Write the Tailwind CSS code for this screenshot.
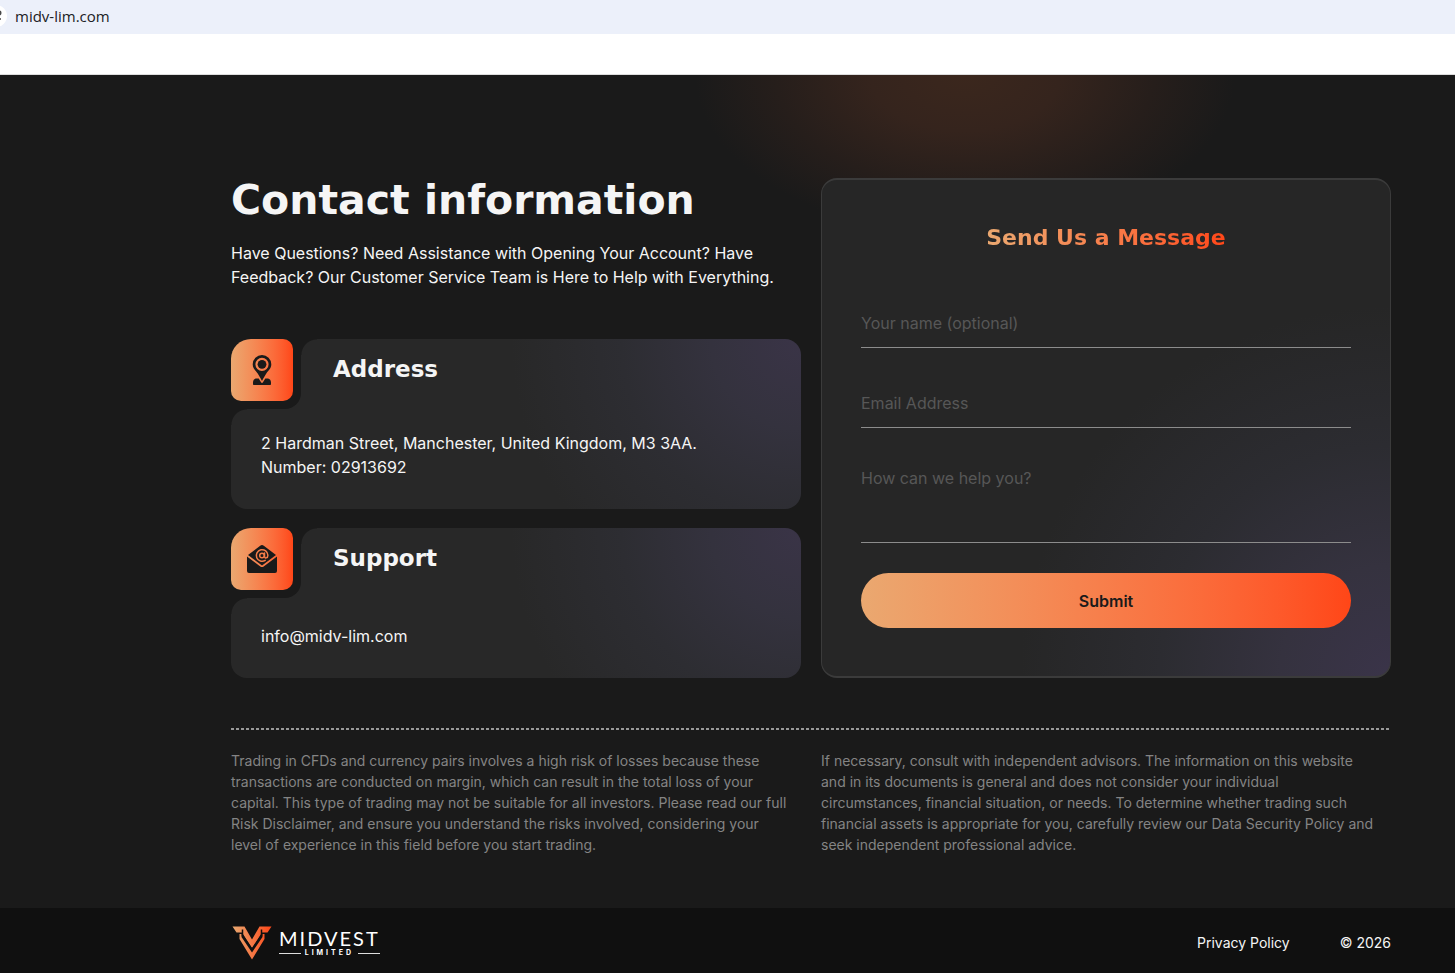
<!DOCTYPE html>
<html lang="en">
<head>
    <meta charset="UTF-8">
    <meta name="viewport" content="width=device-width, initial-scale=1.0">
    <title>Midvest Limited - Contact</title>
    <script src="https://cdn.jsdelivr.net/npm/@tailwindcss/browser@4"></script>
</head>
<body class="min-h-screen flex flex-col bg-[#1a1a1a] font-['Inter',sans-serif] text-base text-[#f5f5f5]">
    <!-- Address bar -->
    <header class="bg-white h-[75px] border-b border-[#dddddd]">
        <div class="flex items-center h-[34px] pb-[2px] bg-[#ecf0fa] overflow-hidden">
            <svg class="w-[22px] h-[22px] -ml-[15px] shrink-0" viewBox="0 0 22 22" fill="none">
                <circle cx="11" cy="11" r="11" fill="#fff" />
                <path d="M6 8h6M11 14h5" stroke="#474747" stroke-width="1.5" />
                <circle cx="14" cy="8" r="1.8" stroke="#474747" stroke-width="1.5" />
                <circle cx="8" cy="14" r="1.8" stroke="#474747" stroke-width="1.5" />
            </svg>
            <span class="ml-2 font-['Open_Sans',sans-serif] text-[15px] text-[#202124]">midv-lim.com</span>
        </div>
    </header>

    <!-- Main Content -->
    <main class="grow pl-[231px] pr-16 pt-[103px] pb-[52px] bg-[radial-gradient(ellipse_270px_160px_at_965px_0px,#3b271d,#35241d_35%,#261e1b_70%,#1a1a1a)] bg-no-repeat">
        <div class="grid grid-cols-2 gap-5">
            <!-- Contact information -->
            <section class="flex flex-col">
                <h1 class="font-['DejaVu_Sans',sans-serif] font-bold text-[41px] leading-[44px]">Contact information</h1>
                <p class="mt-[19px] leading-6">Have Questions? Need Assistance with Opening Your Account? Have Feedback? Our Customer Service Team is Here to Help with Everything.</p>

                <div class="mt-[50px] h-[170px] rounded-2xl bg-[radial-gradient(circle_at_100%_0%,#3a3447,#34323e_90px,#2d2d32_180px,#282828_290px)]">
                    <div class="flex">
                        <div class="relative w-[70px] h-[70px] bg-[#1a1a1a] rounded-br-2xl">
                            <div class="flex items-center justify-center w-[62px] h-[62px] rounded-[10px] rounded-tl-[20px] bg-linear-to-r from-[#eaa870] to-[#ff4617]">
                                <svg class="w-[30px] h-[30px]" viewBox="0 0 30 30" fill="#1a1a1a">
                                    <path fill-rule="evenodd" d="M15 0a9.300 9.300 0 0 1 9.300 9.300c0 4.400-2.800 6-5 9.200-1.500 2.200-2.600 4.500-4.300 7.500-1.700-3-2.800-5.300-4.300-7.500-2.200-3.200-5-4.800-5-9.200A9.300 9.300 0 0 1 15 0zm0 2.700a6.600 6.600 0 1 0 0 13.200 6.600 6.600 0 0 0 0-13.200z" />
                                    <circle cx="15" cy="9.300" r="4.400" />
                                    <path d="M9 23.500c-1.800.3-3 1.800-3 4V29c0 .6.400 1 1 1h16c.6 0 1-.4 1-1v-1.500c0-2.200-1.200-3.700-3-4h-2.700L15.800 27.500c-.4.600-1.200.6-1.600 0L11.700 23.500z" />
                                </svg>
                            </div>
                            <span class="absolute left-full top-0 w-4 h-4 bg-[radial-gradient(circle_at_100%_100%,transparent_15px,#1a1a1a_16px)]"></span>
                            <span class="absolute left-0 top-full w-4 h-4 bg-[radial-gradient(circle_at_100%_100%,transparent_15px,#1a1a1a_16px)]"></span>
                        </div>
                        <h2 class="ml-8 mt-4 font-['DejaVu_Sans',sans-serif] font-bold text-[23px] leading-7">Address</h2>
                    </div>
                    <p class="mt-[22px] px-[30px] leading-6">2 Hardman Street, Manchester, United Kingdom, M3 3AA.<br>Number: 02913692</p>
                </div>

                <div class="mt-[19px] h-[150px] rounded-2xl bg-[radial-gradient(circle_at_100%_0%,#3a3447,#34323e_90px,#2d2d32_180px,#282828_290px)]">
                    <div class="flex">
                        <div class="relative w-[70px] h-[70px] bg-[#1a1a1a] rounded-br-2xl">
                            <div class="flex items-center justify-center w-[62px] h-[62px] rounded-[10px] rounded-tl-[20px] bg-linear-to-r from-[#eaa870] to-[#ff4617]">
                                <svg class="w-[30px] h-[30px]" viewBox="0 0 30 30" fill="#1a1a1a">
                                    <path d="M15 1c.7 0 1.200.3 1.800.8L29 11 15 21.500 1 11l12.200-9.200C13.800 1.300 14.300 1 15 1z" />
                                    <path d="M0 12.500l13.300 10c1 .8 2.400.8 3.400 0l13.300-10V27a2 2 0 0 1-2 2H2a2 2 0 0 1-2-2z" />
                                    <g fill="none" stroke="#f37c49" stroke-width="1.500" stroke-linecap="round">
                                        <circle cx="15" cy="11.500" r="2.300" />
                                        <path d="M17.500 9v3.200c0 2.600 3.400 2.200 3.400-.9a5.800 5.800 0 1 0-2.700 5.100" />
                                    </g>
                                </svg>
                            </div>
                            <span class="absolute left-full top-0 w-4 h-4 bg-[radial-gradient(circle_at_100%_100%,transparent_15px,#1a1a1a_16px)]"></span>
                            <span class="absolute left-0 top-full w-4 h-4 bg-[radial-gradient(circle_at_100%_100%,transparent_15px,#1a1a1a_16px)]"></span>
                        </div>
                        <h2 class="ml-8 mt-4 font-['DejaVu_Sans',sans-serif] font-bold text-[23px] leading-7">Support</h2>
                    </div>
                    <p class="mt-[26px] px-[30px] leading-6">info@midv-lim.com</p>
                </div>
            </section>

            <!-- Message form -->
            <form class="flex flex-col px-[39px] pt-11 rounded-2xl border border-y-2 border-[#3b3b3b] bg-[radial-gradient(circle_at_100%_100%,#3a3449,#35323f_110px,#2c2c31_230px,#262626_370px)]">
                <h2 class="self-center font-['DejaVu_Sans',sans-serif] font-bold text-[22px] leading-7 text-transparent bg-clip-text bg-linear-to-r from-[#eaa870] to-[#ff4617]">Send Us a Message</h2>
                <input type="text" aria-label="Your name (optional)" placeholder="Your name (optional)" class="mt-[46px] h-[50px] border-b border-[#8c8c8c] placeholder:text-[#575757] outline-none">
                <input type="email" aria-label="Email Address" placeholder="Email Address" class="mt-[30px] h-[50px] border-b border-[#8c8c8c] placeholder:text-[#575757] outline-none">
                <textarea aria-label="How can we help you?" placeholder="How can we help you?" class="mt-[30px] pt-2 h-[85px] leading-6 border-b border-[#8c8c8c] placeholder:text-[#575757] outline-none resize-none"></textarea>
                <button type="submit" class="mt-[30px] h-[55px] rounded-full bg-linear-to-r from-[#eaa870] to-[#ff4617] font-semibold text-[#1a1a1a]">Submit</button>
            </form>
        </div>

        <!-- Risk disclaimer -->
        <div class="mt-[50px] h-[2px] bg-[repeating-linear-gradient(90deg,#999_0px,#999_3px,transparent_3px,transparent_5px)]"></div>
        <div class="mt-5 grid grid-cols-2 gap-5 text-sm leading-[21px] text-[#848484]">
            <p class="pr-3">Trading in CFDs and currency pairs involves a high risk of losses because these transactions are conducted on margin, which can result in the total loss of your capital. This type of trading may not be suitable for all investors. Please read our full Risk Disclaimer, and ensure you understand the risks involved, considering your level of experience in this field before you start trading.</p>
            <p class="pr-3">If necessary, consult with independent advisors. The information on this website and in its documents is general and does not consider your individual circumstances, financial situation, or needs. To determine whether trading such financial assets is appropriate for you, carefully review our Data Security Policy and seek independent professional advice.</p>
        </div>
    </main>

    <!-- Footer -->
    <footer class="flex items-center justify-between h-[65px] pl-[231px] pr-16 pt-1 bg-[#101010] text-sm">
        <a href="/" class="flex items-center">
            <svg class="w-[42px] h-[36px]" viewBox="0 0 42 36">
                <defs>
                    <linearGradient id="logo" gradientUnits="userSpaceOnUse" x1="2" x2="41" y1="0" y2="0">
                        <stop offset="0" stop-color="#eaa870" />
                        <stop offset="1" stop-color="#ff4617" />
                    </linearGradient>
                </defs>
                <path fill="url(#logo)" d="M1.500 1.500H13.500L21 14.500 28.500 1.500H40.500L36.500 7.500H31L21 23 11 7.500H5.500z" />
                <path fill="url(#logo)" d="M8.500 9L10.500 9 10.500 12 21 27.500 31.500 12 31.500 9 33.500 9 33.500 14 21 34.500 8.500 14z" />
                <path fill="none" stroke="#101010" stroke-width="1.500" d="M11.500 4.500V10.500L21 24.500 30.500 10.500V4.500" />
            </svg>
            <span class="ml-[6px] flex flex-col text-white">
                <span class="font-['Lato',sans-serif] text-[20px] leading-5 tracking-widest">MIDVEST</span>
                <span class="mt-px flex items-center gap-1 font-['Inter',sans-serif] text-[7px] leading-2 font-bold tracking-[3px]">
                    <span class="grow h-px bg-[#dddddd]"></span>LIMITED<span class="grow h-px bg-[#dddddd]"></span>
                </span>
            </span>
        </a>
        <div class="flex gap-[50px]">
            <a href="/privacy">Privacy Policy</a>
            <span>© 2026</span>
        </div>
    </footer>
</body>
</html>
